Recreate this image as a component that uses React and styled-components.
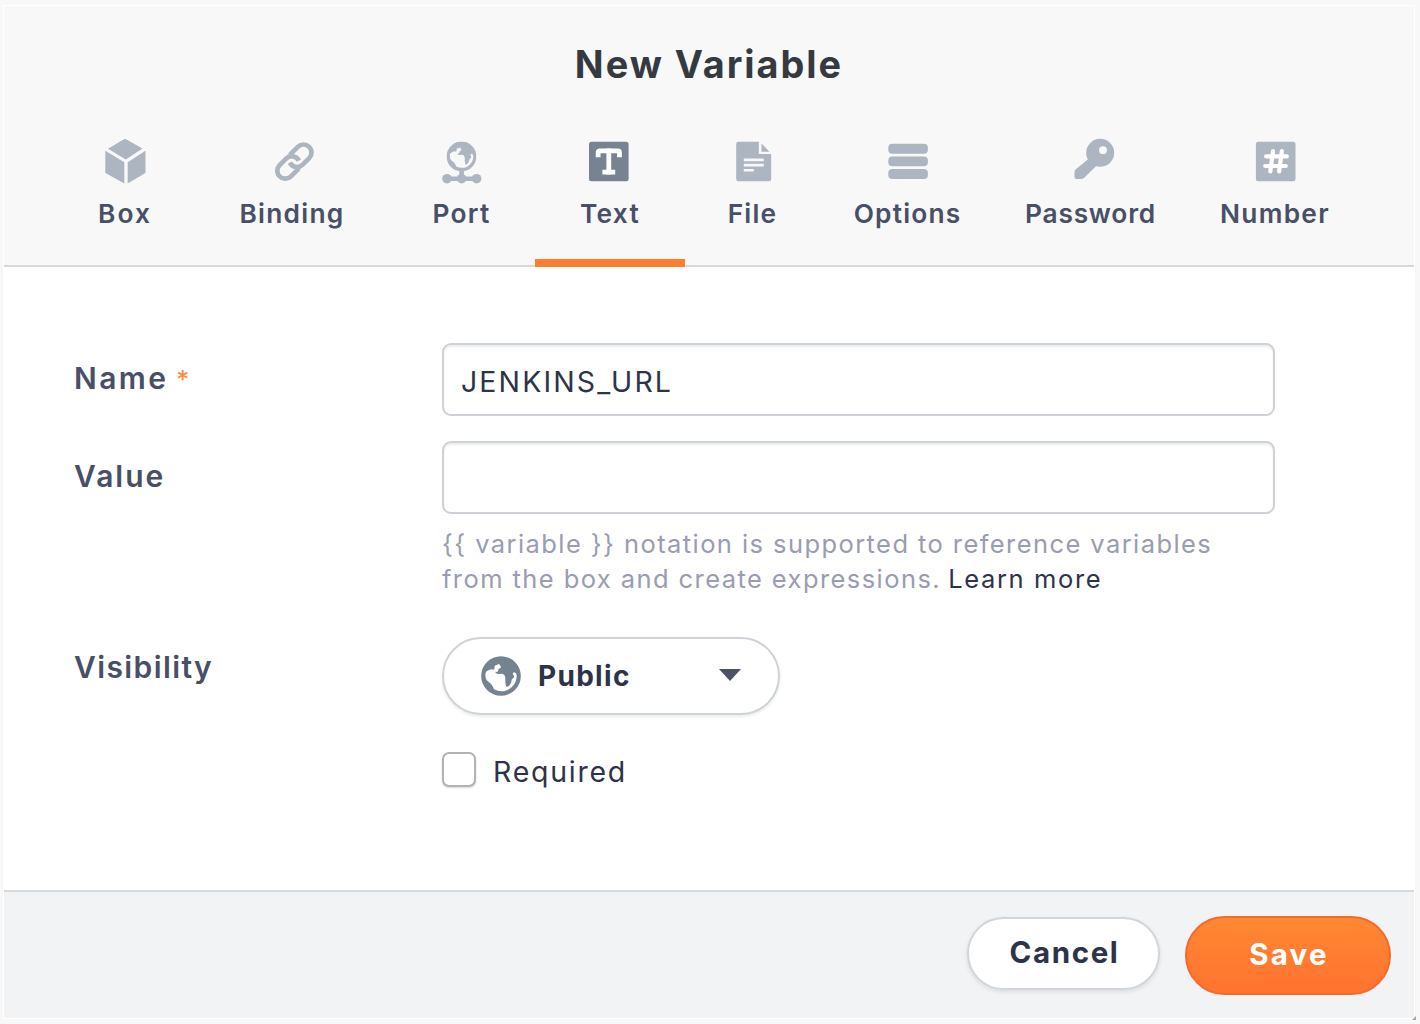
import React, { useState } from "react";
import styled, { createGlobalStyle } from "styled-components";
import { Type } from "lucide-react";

const GlobalStyle = createGlobalStyle`
  *, *::before, *::after { box-sizing: border-box; }
  body {
    margin: 0;
    background: #f8f8f8;
    font-family: Inter, "Liberation Sans", sans-serif;
    color: #2d3348;
  }
  button, input { font: inherit; color: inherit; }
`;

const Page = styled.div`
  height: 1024px;
  padding: 5px 5px 5px 3px;
  overflow: hidden;
`;

const Dialog = styled.section`
  position: relative;
  display: flex;
  flex-direction: column;
  height: 1014px;
  border: 1px solid #fff;
  background: #fff;

  &::after {
    content: "";
    position: absolute;
    right: -2px;
    bottom: -2px;
    border: 2px solid transparent;
    border-right-color: #a2a4a6;
    border-bottom-color: #a2a4a6;
  }
`;

const Header = styled.header`
  height: 261px;
  background: #f8f8f8;
  border-bottom: 2px solid #d6d9dc;
`;

const Title = styled.h1`
  margin: 0;
  height: 116px;
  line-height: 117px;
  text-align: center;
  font-size: 37.8px;
  font-weight: 700;
  letter-spacing: 2px;
  color: #343a40;
`;

const Tabs = styled.nav`
  display: flex;
  height: 145px;
  margin-bottom: -2px;
  padding-left: 50px;
`;

const Tab = styled.button`
  display: flex;
  flex-direction: column;
  align-items: center;
  width: ${(p) => p.$width}px;
  height: 145px;
  padding: 16px 0 0;
  border: 0;
  border-bottom: 8px solid ${(p) => (p.$active ? "#ff7d2e" : "transparent")};
  background: none;
  color: ${(p) => (p.$active ? "#778390" : "#adb5c0")};

  svg { display: block; flex: none; }
`;

const TabLabel = styled.span`
  margin: 8px 0 0;
  line-height: 40px;
  font-size: 26.3px;
  font-weight: 600;
  letter-spacing: ${(p) => p.$tracking}px;
  color: #484f66;
`;

const Form = styled.div`
  flex: none;
  height: 623px;
  padding: 76px 0 0 70px;
`;

const Row = styled.div`
  display: grid;
  grid-template-columns: 368px 833px;
  margin-bottom: ${(p) => p.$gap || 0}px;
`;

const Label = styled.label`
  line-height: ${(p) => p.$line}px;
  height: ${(p) => p.$line}px;
  font-size: 30px;
  font-weight: 600;
  letter-spacing: ${(p) => p.$tracking}px;
  color: #484f66;
`;

const Star = styled.span`
  margin-left: 8px;
  font-size: 25px;
  font-weight: 500;
  color: #ff8a42;
`;

const Input = styled.input`
  width: 833px;
  height: 73px;
  padding: 4px 17px 0;
  border: 2px solid #cdd2d6;
  border-radius: 9px;
  outline: none;
  background: #fff;
  box-shadow: inset 0 2px 2px #ebedef;
  font-size: 28.5px;
  letter-spacing: 2.1px;
`;

const Hint = styled.p`
  margin: 13px 0 0;
  line-height: 34.5px;
  font-size: 25.5px;
  letter-spacing: 1.42px;
  white-space: nowrap;
  color: #9a9caf;
`;

const More = styled.a`
  margin-left: -1.5px;
  letter-spacing: 1.65px;
  color: #2d3348;
`;

const Select = styled.button`
  display: flex;
  align-items: center;
  width: 338px;
  height: 78px;
  padding: 0 37px 0 36.5px;
  border: 2px solid #ced3d8;
  border-radius: 39px;
  background: #fff;
  box-shadow: 0 2px 3px rgba(60, 70, 80, 0.1);
  font-size: 28px;
  font-weight: 700;
  letter-spacing: 1.3px;
`;

const SelectText = styled.span`
  flex: 1;
  margin-left: 17.5px;
  text-align: left;
`;

const Caret = styled.span`
  margin-top: -3px;
  border: 11px solid transparent;
  border-top: 12px solid #4b5266;
  border-bottom: 0;
`;

const CheckRow = styled.label`
  grid-column: 2;
  display: flex;
  gap: 17px;
  line-height: 39px;
  font-size: 28.5px;
  letter-spacing: 1.75px;
`;

const Check = styled.input`
  appearance: none;
  width: 34px;
  height: 35px;
  margin: 0;
  border: 2px solid #b3b3b3;
  border-radius: 7px;
  background: #fff;
  box-shadow: 0 1px 2px rgba(0, 0, 0, 0.15);
`;

const Footer = styled.footer`
  display: flex;
  flex: 1;
  justify-content: flex-end;
  align-items: flex-start;
  gap: 25px;
  padding: 24px 23px 0 0;
  border-top: 2px solid #d5dade;
  background: #f1f3f5;
`;

const Button = styled.button`
  width: ${(p) => (p.$primary ? 206 : 193)}px;
  height: ${(p) => (p.$primary ? 79 : 73)}px;
  margin-top: ${(p) => (p.$primary ? 0 : 1)}px;
  padding: 0 0 3px 2px;
  border: 2px solid ${(p) => (p.$primary ? "#f9692a" : "#d2d5da")};
  border-radius: 40px;
  background: ${(p) => (p.$primary ? "linear-gradient(#ff8832, #ff7330)" : "#fff")};
  box-shadow: ${(p) => (p.$primary ? "none" : "0 2px 4px rgba(60, 70, 80, 0.12)")};
  font-size: 29.5px;
  font-weight: 700;
  letter-spacing: ${(p) => (p.$primary ? 2.2 : 1.6)}px;
  color: ${(p) => (p.$primary ? "#fff" : "#2d3348")};
`;

const Icon = ({ children }) => (
  <svg width="48" height="48" viewBox="0 0 48 48" fill="currentColor">
    {children}
  </svg>
);

/* Drawn on a 120-unit square with the disc centred at 60. */
const GlobeShape = ({ land }) => (
  <>
    <circle cx="60" cy="60" r="59.5" fill="currentColor" />
    <path
      fill={land}
      d="M13 53 Q15 44 24 42 Q32 38 38 41 Q42 38 40 33 Q42 26 48 27 L52 24 Q58 25 58 30 Q62 34 57 37 L53 38 L51 46 L42 50 L51 54 L65 53 Q73 57 73 66 Q72 76 75 91 L81 92 Q91 84 92 71 L99 64 Q100 58 95 54 L98 49 Q106 49 107 58 C108 82 90 101 71 105 Q54 108 39 100 L35 91 Q31 83 24 79 Q15 74 14 65 Z"
    />
  </>
);

const BoxIcon = () => (
  <Icon>
    <path d="M23 1.2 Q24 .6 25 1.2 L41.5 10.6 L24.8 21.5 L7 10.7 Z" />
    <path d="M4.3 12.8 L23.3 24.2 V45.5 L5.3 35.6 Q4.3 35 4.3 34 Z" />
    <path d="M26.7 24.2 L44.5 12.8 V34 Q44.5 35 43.5 35.6 L26.7 45.5 Z" />
  </Icon>
);

/* Two interlocked links, laid out horizontally and turned 45 degrees. */
const BindingIcon = () => (
  <Icon>
    <g
      transform="translate(26.4 23.6) rotate(-45)"
      fill="none"
      stroke="currentColor"
      strokeWidth="4.7"
    >
      <path d="M1.5 -8H12.9a8 8 0 0 1 0 16H3.7a8 8 0 0 1-7.6-10.5" />
      <path d="M-1.5 8H-12.9a8 8 0 0 1 0-16H-3.7a8 8 0 0 1 7.6 10.5" />
    </g>
  </Icon>
);

const PortIcon = () => (
  <Icon>
    <svg x="8.5" y="3.4" width="30" height="30" viewBox="0 0 120 120">
      <GlobeShape land="#f8f8f8" />
    </svg>
    <path d="M21.3 32h4.6v6.4h-4.6zM9 38.5h30v4.6H9z" />
    <circle cx="9" cy="40.7" r="4.8" />
    <circle cx="23.6" cy="40.7" r="4.8" />
    <circle cx="38.6" cy="40.7" r="4.8" />
  </Icon>
);

const SlabType = styled(Type)`
  stroke-linecap: square;
  stroke-linejoin: miter;
`;

const TextIcon = () => (
  <Icon>
    <rect x="3" y="3.7" width="39.6" height="39.6" rx="2.5" />
    <SlabType x="6.8" y="7.5" size={32} color="#fff" strokeWidth={3.6} />
  </Icon>
);

const FileIcon = () => (
  <Icon>
    <path d="M9.4 3.7 H29.8 V16 H42.2 V41 Q42.2 43.3 39.9 43.3 H9.4 Q7.2 43.3 7.2 41 V6 Q7.2 3.7 9.4 3.7 Z" />
    <path d="M32.5 5.6 L40.4 13.7 H32.5 Z" />
    <path d="M14.8 20.6h20v2.7h-20zM14.8 25.7h20v2.7h-20zM14.8 30.9h10v2.7h-10z" fill="#f8f8f8" />
  </Icon>
);

const OptionsIcon = () => (
  <Icon>
    <rect x="4.3" y="5.8" width="39.6" height="9.9" rx="4" />
    <rect x="4.3" y="18.4" width="39.6" height="9.9" rx="4" />
    <rect x="4.3" y="31" width="39.6" height="9.9" rx="4" />
  </Icon>
);

const KeyIcon = () => (
  <Icon>
    <circle cx="33.2" cy="14.8" r="14" />
    <path d="M20 17 L22 20.5 L8.5 31.5 Q7.5 32.5 7.5 34 V38.8 Q7.5 41 9.5 41 H14 Q16 41 17.3 39.7 L19 38 L29.5 27.8 L30 20 Z" />
    <circle cx="36" cy="12.2" r="3.9" fill="#f8f8f8" />
  </Icon>
);

const NumberIcon = () => (
  <Icon>
    <rect x="4.9" y="3.7" width="39.6" height="39.6" rx="2.5" />
    <path
      d="M15.2 18.4H35.8M14.2 28H34.8M22 13.2L19.3 33.4M30.8 13.2L28.1 33.4"
      stroke="#fff"
      strokeWidth="4.2"
      strokeLinecap="round"
    />
  </Icon>
);

const TABS = [
  { label: "Box", width: 142, tracking: 2, icon: BoxIcon },
  { label: "Binding", width: 192, tracking: 1.3, icon: BindingIcon },
  { label: "Port", width: 147, tracking: 1.3, icon: PortIcon },
  { label: "Text", width: 150, tracking: 1.3, icon: TextIcon },
  { label: "File", width: 135, tracking: 1.2, icon: FileIcon },
  { label: "Options", width: 175, tracking: 1.2, icon: OptionsIcon },
  { label: "Password", width: 191, tracking: 0.8, icon: KeyIcon },
  { label: "Number", width: 178, tracking: 1.3, icon: NumberIcon },
];

export default function App() {
  const [active, setActive] = useState("Text");
  const [name, setName] = useState("JENKINS_URL");
  const [value, setValue] = useState("");

  return (
    <>
      <GlobalStyle />
      <Page>
        <Dialog>
          <Header>
            <Title>New Variable</Title>
            <Tabs>
              {TABS.map(({ label, width, tracking, icon: Glyph }) => (
                <Tab
                  key={label}
                  $width={width}
                  $active={active === label}
                  onClick={() => setActive(label)}
                >
                  <Glyph />
                  <TabLabel $tracking={tracking}>{label}</TabLabel>
                </Tab>
              ))}
            </Tabs>
          </Header>
          <Form>
            <Row $gap={25}>
              <Label htmlFor="name" $line={71} $tracking={2.4}>
                Name<Star>*</Star>
              </Label>
              <Input id="name" value={name} onChange={(e) => setName(e.target.value)} />
            </Row>
            <Row $gap={41}>
              <Label htmlFor="value" $line={71} $tracking={2}>Value</Label>
              <div>
                <Input id="value" value={value} onChange={(e) => setValue(e.target.value)} />
                <Hint>
                  {"{{ variable }} notation is supported to reference variables"}
                  <br />
                  from the box and create expressions. <More>Learn more</More>
                </Hint>
              </div>
            </Row>
            <Row $gap={37}>
              <Label $line={61} $tracking={1.4}>Visibility</Label>
              <Select>
                <svg width="40" height="40" viewBox="0 0 120 120" color="#75828f">
                  <GlobeShape land="#fff" />
                </svg>
                <SelectText>Public</SelectText>
                <Caret />
              </Select>
            </Row>
            <Row>
              <CheckRow>
                <Check type="checkbox" />
                Required
              </CheckRow>
            </Row>
          </Form>
          <Footer>
            <Button>Cancel</Button>
            <Button $primary>Save</Button>
          </Footer>
        </Dialog>
      </Page>
    </>
  );
}
